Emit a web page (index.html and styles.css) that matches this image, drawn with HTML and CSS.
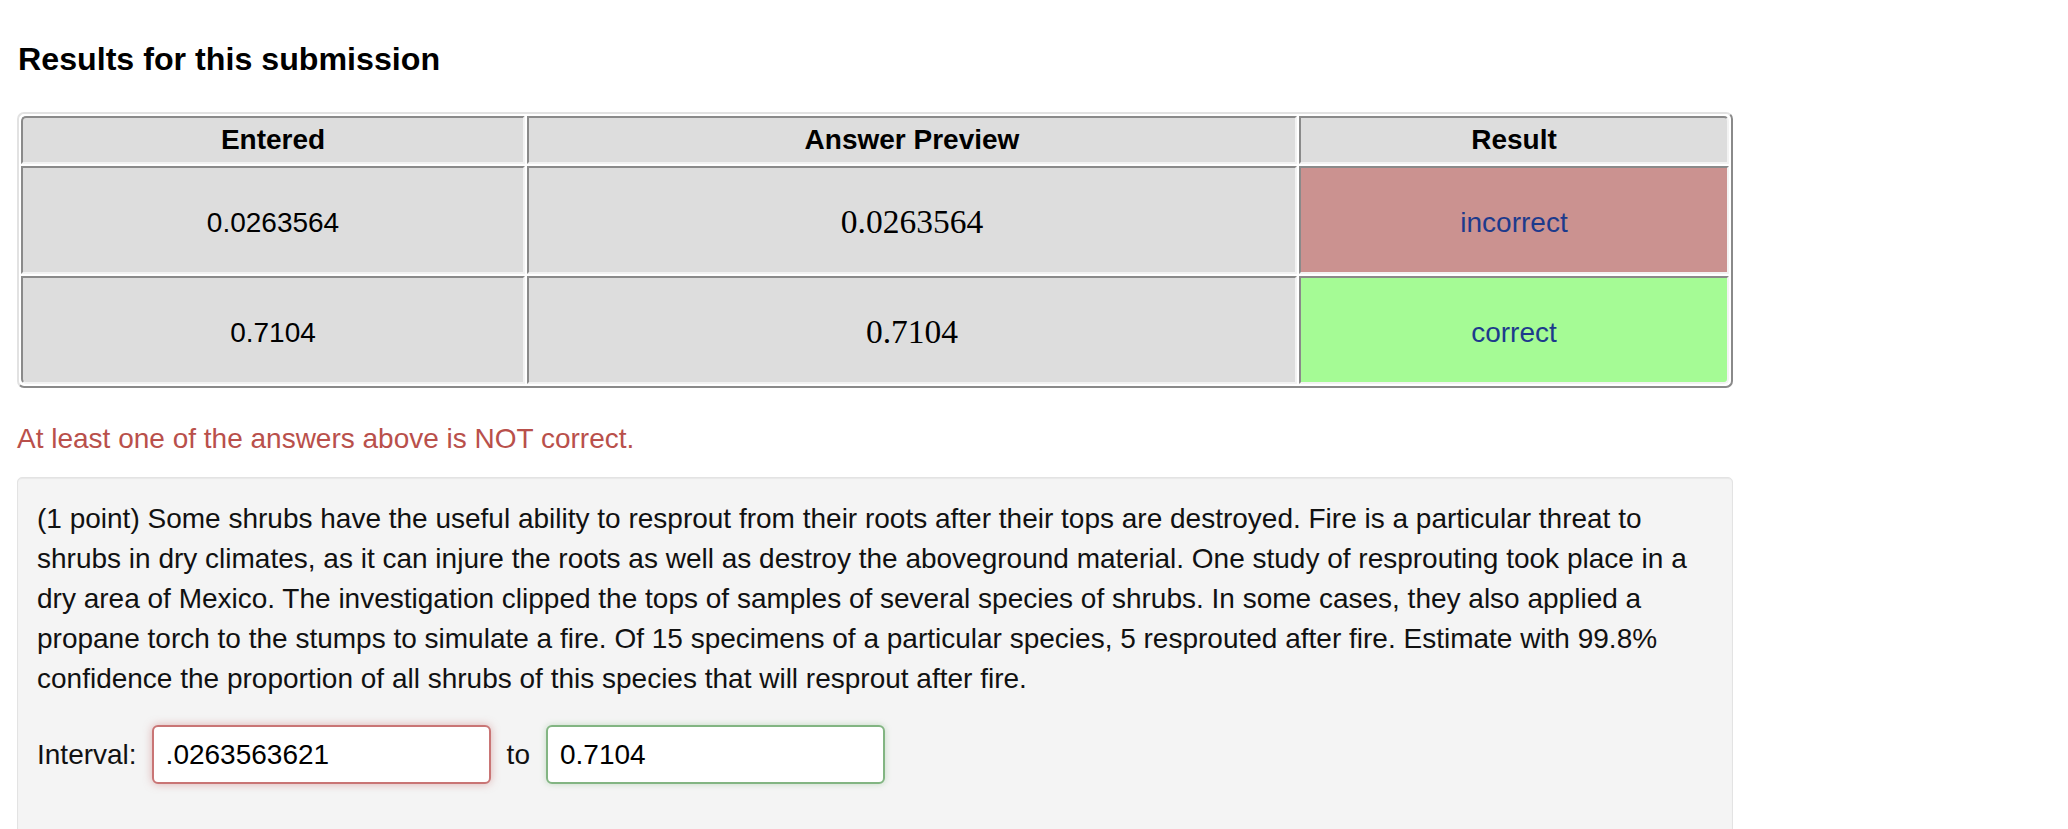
FILE: index.html
```
<!DOCTYPE html>
<html>
<head>
<meta charset="utf-8">
<link rel="stylesheet" href="styles.css">
</head>
<body>
<div class="page">
  <h3 class="results-title">Results for this submission</h3>
  <table class="attempt-results">
    <tr>
      <th class="col-entered corner-tl">Entered</th>
      <th class="col-preview">Answer Preview</th>
      <th class="col-result corner-tr">Result</th>
    </tr>
    <tr>
      <td>0.0263564</td>
      <td class="preview">0.0263564</td>
      <td class="result result-wrong">incorrect</td>
    </tr>
    <tr>
      <td class="corner-bl">0.7104</td>
      <td class="preview">0.7104</td>
      <td class="result result-right corner-br">correct</td>
    </tr>
  </table>
  <div class="summary-error">At least one of the answers above is NOT correct.</div>
  <div class="problem-well">
    <p class="problem-text">(1 point) Some shrubs have the useful ability to resprout from their roots after their tops are destroyed. Fire is a particular threat to shrubs in dry climates, as it can injure the roots as well as destroy the aboveground material. One study of resprouting took place in a dry area of Mexico. The investigation clipped the tops of samples of several species of shrubs. In some cases, they also applied a propane torch to the stumps to simulate a fire. Of 15 specimens of a particular species, 5 resprouted after fire. Estimate with 99.8% confidence the proportion of all shrubs of this species that will resprout after fire.</p>
    <div class="interval-row">
      <span class="label">Interval:</span>
      <input class="answer answer-wrong" type="text" value=".0263563621">
      <span class="label">to</span>
      <input class="answer answer-right" type="text" value="0.7104">
    </div>
  </div>
</div>
</body>
</html>
```
FILE: styles.css
```
html, body {
  margin: 0;
  padding: 0;
  background: #ffffff;
}
body {
  font-family: "Liberation Sans", Arial, Helvetica, sans-serif;
  font-size: 28px;
  line-height: 40px;
  color: #111111;
}
.page {
  padding: 0 17px;
  width: 1716px;
}
.results-title {
  font-size: 32.2px;
  font-weight: bold;
  line-height: 40px;
  margin: 39px 0 33px 1px;
  color: #000;
}
.attempt-results {
  width: 1716px;
  table-layout: fixed;
  border-collapse: separate;
  border-spacing: 2px;
  border-style: solid;
  border-width: 2px;
  border-color: #e2e2e2 #8a8a8a #8a8a8a #e2e2e2;
  border-radius: 7px;
}
.attempt-results th,
.attempt-results td {
  box-sizing: border-box;
  background: #dddddd;
  border-style: solid;
  border-width: 2px;
  border-color: #8a8a8a #f3f3f3 #f3f3f3 #8a8a8a;
  text-align: center;
  vertical-align: middle;
  padding: 2px 10px;
  color: #000;
}
.attempt-results th {
  height: 48px;
  font-weight: bold;
}
.attempt-results td {
  height: 108px;
  padding-top: 7px;
}
.col-entered { width: 504px; }
.col-preview { width: 770px; }
.col-result { width: 430px; }
.corner-tl { border-top-left-radius: 5px; }
.corner-tr { border-top-right-radius: 5px; }
.corner-bl { border-bottom-left-radius: 5px; }
.corner-br { border-bottom-right-radius: 5px; }
.attempt-results td.preview {
  font-family: "Liberation Serif", "Times New Roman", serif;
  font-size: 33.5px;
  padding-top: 6px;
  padding-bottom: 2px;
}
.attempt-results td.result {
  color: #1d3a8c;
}
.attempt-results td.result-wrong {
  background: #cb9290;
}
.attempt-results td.result-right {
  background: #a5fb95;
}
.summary-error {
  color: #b9504b;
  margin: 31px 0 18px 0;
}
.problem-well {
  background: #f4f4f4;
  border: 1px solid #e3e3e3;
  border-radius: 5px;
  box-shadow: inset 0 1px 1px rgba(0,0,0,0.05);
  padding: 21px 20px 60px 19px;
}
.problem-text {
  margin: 0;
}
.interval-row {
  display: flex;
  align-items: center;
  margin-top: 26px;
}
.label {
  line-height: 40px;
}
.answer {
  box-sizing: border-box;
  width: 339px;
  height: 59px;
  margin: 0 16px 0 15px;
  padding: 0 12px;
  font-family: "Liberation Sans", Arial, Helvetica, sans-serif;
  font-size: 28px;
  color: #000;
  background: #ffffff;
  border-radius: 6px;
  outline: none;
}
.answer-wrong {
  border: 2px solid #c97575;
  box-shadow: 0 0 8px rgba(200, 110, 110, 0.5);
}
.answer-right {
  margin-left: 16px;
  border: 2px solid #82b582;
  box-shadow: 0 0 6px rgba(120, 180, 120, 0.4);
}
```
